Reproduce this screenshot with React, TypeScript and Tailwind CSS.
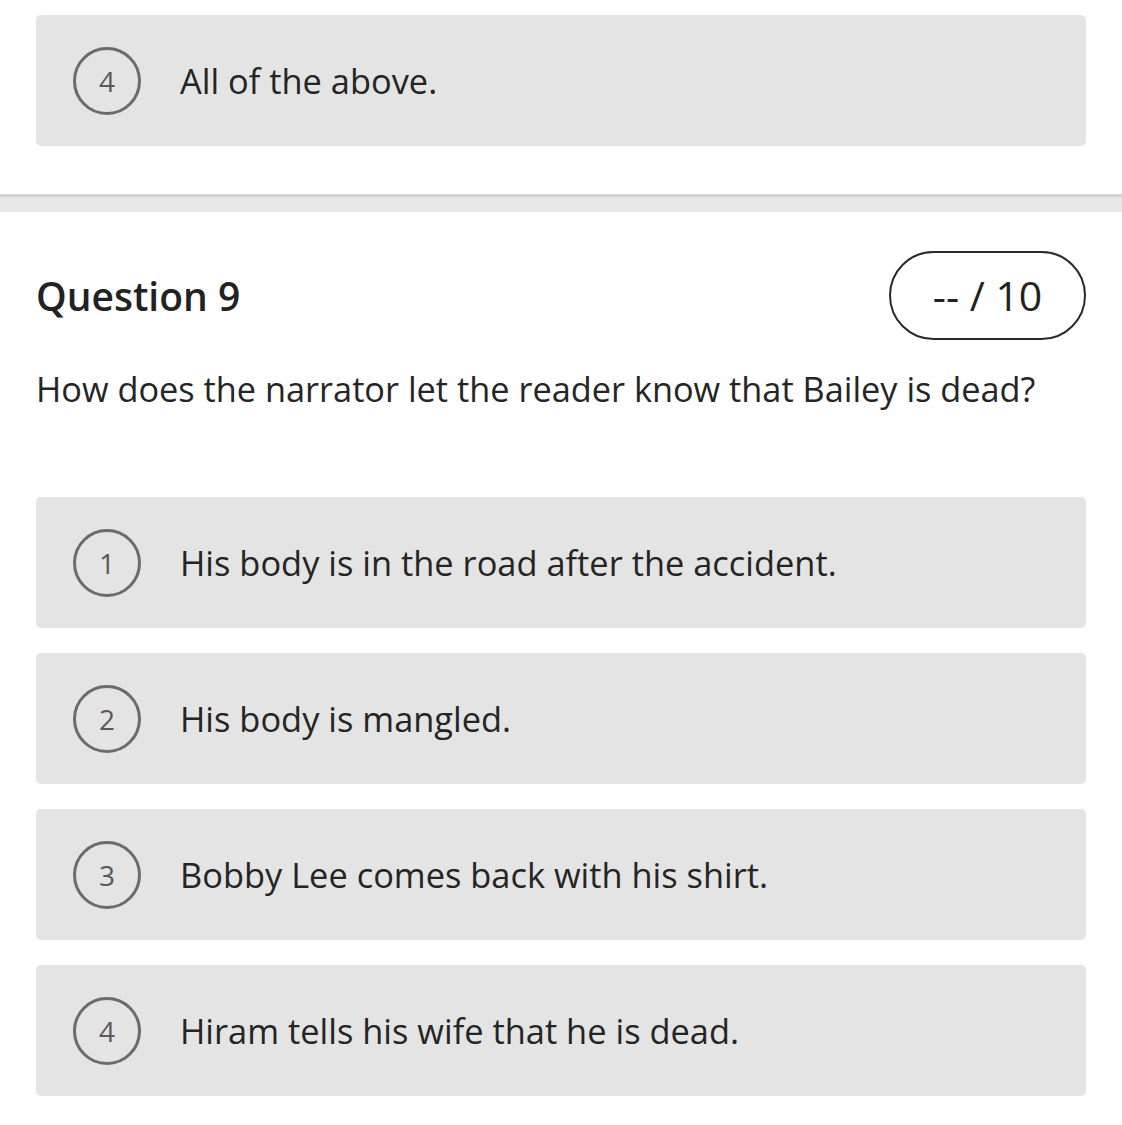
import React from "react";

function Option({ n, text }: { n: number; text: string }) {
  return (
    <div className="flex h-[131px] items-center rounded-[5px] bg-[#e4e4e4] pl-[37px]">
      <div className="flex h-[68px] w-[68px] shrink-0 items-center justify-center rounded-full border-[3px] border-[#6b6b6b] text-[28px] text-[#5a5a5a]">
        {n}
      </div>
      <div className="ml-[39px] text-[34.4px] text-[#252525]">{text}</div>
    </div>
  );
}

export default function App() {
  return (
    <div className="min-h-[1125px] w-[1122px] bg-white" style={{ fontFamily: '"Open Sans", sans-serif' }}>
      <div className="px-[36px] pt-[15px]">
        <Option n={4} text="All of the above." />
      </div>
      <div className="mt-[48px] h-[18px] border-t-[3px] border-[#d4d4d4] bg-[#e8e8e8]" />
      <div className="px-[36px]">
        <div className="mt-[39px] flex items-center justify-between">
          <div className="text-[39px] leading-[58px] font-semibold text-[#222]">Question 9</div>
          <div className="flex h-[89px] w-[197px] items-center justify-center rounded-full border-[2.5px] border-[#2a2a2a] text-[41px] font-medium text-[#222]">
            -- / 10
          </div>
        </div>
        <div className="mt-[24px] text-[34.3px] leading-[50px] text-[#252525]">
          How does the narrator let the reader know that Bailey is dead?
        </div>
        <div className="mt-[83px] flex flex-col gap-[25px]">
          <Option n={1} text="His body is in the road after the accident." />
          <Option n={2} text="His body is mangled." />
          <Option n={3} text="Bobby Lee comes back with his shirt." />
          <Option n={4} text="Hiram tells his wife that he is dead." />
        </div>
      </div>
    </div>
  );
}
